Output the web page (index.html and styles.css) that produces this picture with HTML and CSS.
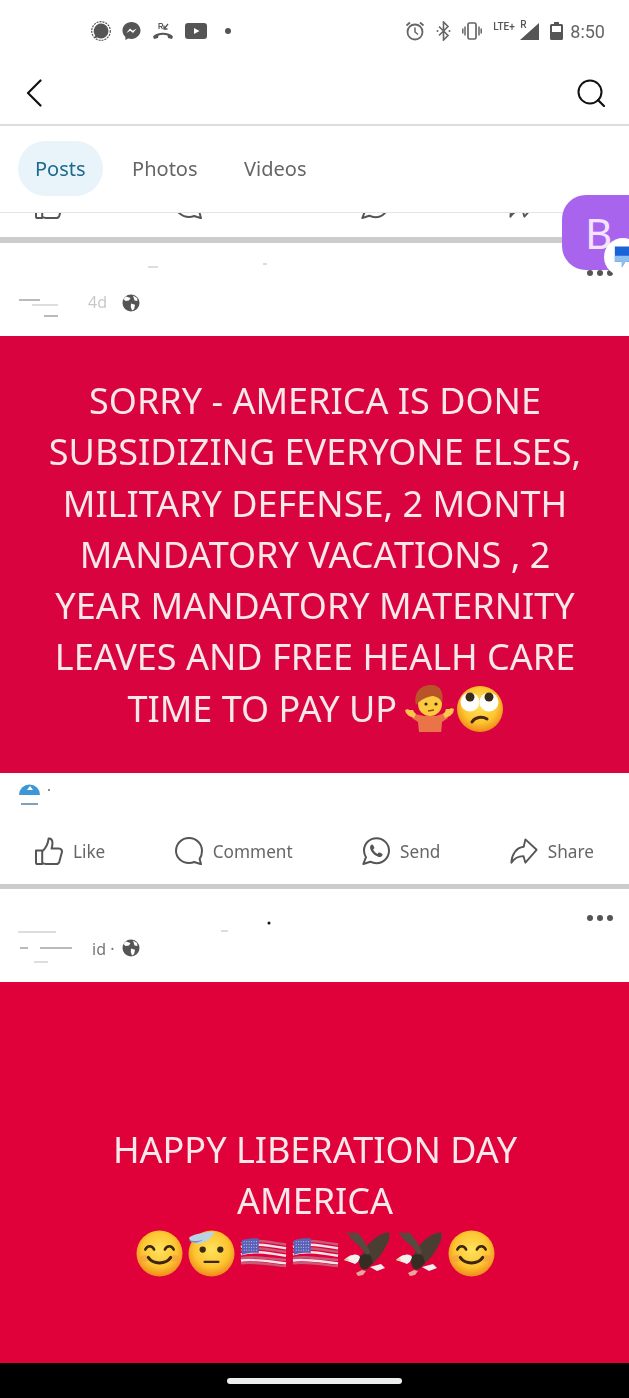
FILE: index.html
```html
<!DOCTYPE html>
<html lang="en">
<head>
  <meta charset="UTF-8" />
  <meta name="viewport" content="width=device-width, initial-scale=1.0" />
  <title>Posts</title>
  <link rel="stylesheet" href="styles.css">
</head>
<body>

  <!-- Shared icons -->
  <svg class="defs" aria-hidden="true">
    <defs>
      <radialGradient id="face" cx="50%" cy="42%" r="58%">
        <stop offset="0%" stop-color="#ffe25c"/>
        <stop offset="65%" stop-color="#fdc531"/>
        <stop offset="100%" stop-color="#f08a1a"/>
      </radialGradient>
      <symbol id="i-like" viewBox="0 0 28 28">
        <path d="M1 13.5h6.2V27H2.600A1.600 1.600 0 0 1 1 25.400zM7.200 14.500C11 11 13 7 13.600 1.600c3.600-.6 4.800 3.400 3 10h7.200c2.600 0 3.600 2 3 4l-2.400 9c-.5 1.600-1.500 2.400-3 2.400H11c-1.600 0-2.800-.4-3.800-1.200" fill="none" stroke="currentColor" stroke-width="2" stroke-linejoin="round"/>
      </symbol>
      <symbol id="i-comment" viewBox="0 0 28 28">
        <path d="M14 1C6.800 1 1 6.600 1 13.800 1 20.900 6.800 26 14 26c2 0 3.600-.3 5.200-1l6.800 2.200-1.400-5.400c1.700-2.200 2.400-5 2.400-8C27 6.600 21.200 1 14 1z" fill="none" stroke="currentColor" stroke-width="2" stroke-linejoin="round"/>
      </symbol>
      <symbol id="i-send" viewBox="0 0 28 28">
        <path d="M14.500 1.200C7.500 1.200 2 6.700 2 13.500c0 2.500.7 4.700 2 6.700L1.300 27l7-2.300c1.900 1 3.900 1.500 6.200 1.500C21.500 26.200 27 20.500 27 13.700S21.500 1.200 14.500 1.200z" fill="none" stroke="currentColor" stroke-width="2" stroke-linejoin="round"/>
        <path d="M10 7.500c-1.500.5-2.200 2-1.900 3.600.8 3.900 4.600 7.900 8.600 8.800 1.700.4 3.300-.4 3.800-2 .2-.5 0-.9-.4-1.100l-2.600-1.300c-.4-.2-.8-.1-1.100.3l-.9 1.100c-2-.8-3.600-2.400-4.400-4.300l1-1c.3-.3.4-.7.2-1.100L11 8c-.2-.4-.6-.6-1-.5z" fill="currentColor"/>
      </symbol>
      <symbol id="i-share" viewBox="0 0 30 28">
        <path d="M16.500 1.500 28.500 12.700 16.500 26.500 14.500 19.500C9 19.300 5 21.500 1.500 26.500 1.800 18.500 6 10.600 14.700 9.500z" fill="none" stroke="currentColor" stroke-width="2" stroke-linejoin="round"/>
      </symbol>
      <symbol id="i-globe" viewBox="0 0 18 18">
        <circle cx="9" cy="9" r="8.500" fill="#555"/>
        <path d="M4 2.500 8.500 4 7 6.500 3.500 7 1.500 5zM9 9.500l4 1.200-.8 4.300-2.200 1.500-1.200-3.500zM11 1.500l4 2.500 .5 3-3 -.5z" fill="#fff"/>
      </symbol>
      <symbol id="e-smile" viewBox="0 0 48 48">
        <circle cx="24" cy="24" r="23.500" fill="url(#face)"/>
        <ellipse cx="9" cy="29" rx="5" ry="3.500" fill="#f79a4a" opacity=".6"/>
        <ellipse cx="39" cy="29" rx="5" ry="3.500" fill="#f79a4a" opacity=".6"/>
        <path d="M9.500 20c2-4.500 7-4.500 9 0M29.500 20c2-4.500 7-4.500 9 0" fill="none" stroke="#3b2410" stroke-width="2.600" stroke-linecap="round"/>
        <path d="M12.500 28c5 7.500 18 7.500 23 0" fill="none" stroke="#3b2410" stroke-width="3" stroke-linecap="round"/>
      </symbol>
      <symbol id="e-salute" viewBox="0 0 48 48">
        <circle cx="24" cy="24" r="23.500" fill="url(#face)"/>
        <circle cx="15" cy="20" r="3.200" fill="#3b2a16"/>
        <circle cx="33" cy="20" r="3.200" fill="#3b2a16"/>
        <path d="M17 32.500h14" stroke="#3b2410" stroke-width="2.400" stroke-linecap="round"/>
        <path d="M1 8C5 4 14 3 27 1.500c-2 6.500-7 10-14 12-5 1.500-11-1-12-5.500z" fill="#b9d3e6"/>
        <path d="M1 10c4 2 10 1.500 14 0-3 3-11 5-14 0z" fill="#7b8fc4"/>
      </symbol>
      <symbol id="e-flag" viewBox="0 0 50 34">
        <g fill="none" stroke-width="2.600">
          <path d="M1 6.500C12 2.500 24 4 49 8" stroke="#c65a78"/>
          <path d="M1 10.500C12 6.500 24 8 49 12" stroke="#f7e3ea"/>
          <path d="M1 14.500C12 10.500 24 12 49 16" stroke="#c65a78"/>
          <path d="M1 18.500C12 14.500 24 16 49 20" stroke="#f7e3ea"/>
          <path d="M1 22.500C12 20.500 24 22 49 24.500" stroke="#c65a78"/>
          <path d="M1 25C14 23 26 25.500 49 28" stroke="#f7e3ea"/>
          <path d="M1 28C14 26 26 28.500 49 31" stroke="#c65a78"/>
        </g>
        <path d="M2 3.500C8 1.500 15 1 20 1.500V17C14 16.500 8 17 2 19z" fill="#5a60b4"/>
        <path d="M4 5h14M4 8h14M4 11h14M4 14h14" stroke="#c8cdf0" stroke-width="1" stroke-dasharray="1 1.600"/>
      </symbol>
      <symbol id="e-eagle" viewBox="0 0 47 47">
        <path d="M17 28C21 15 32 4 45 2c2 7-2 12-4 16-3 6-7 11-12 15l-5 5z" fill="#4a3e33"/>
        <path d="M23 26C19 20 16 16 12 13L9 12l1-2-5-2 2-1-4-3 1-2 5 2V1l3 3 1-2 5 6c3 4 6 9 8 14z" fill="#574b40"/>
        <path d="M14 27c4-3 9-4 13-1l2 7-6 6c-3 1-6 0-7-3z" fill="#352c24"/>
        <path d="M0 30c3-3 6-5 9-5 3-1 6 0 7 2-1 4-3 6-5 7-3-1-7-3-11-4z" fill="#f4f0ee"/>
        <path d="M0 30l4-2 1 3z" fill="#e9c98a"/>
        <path d="M26 37l11-3 4 4-8 3z" fill="#f4f0ee"/>
        <path d="M12 43l6-3 4 1-3 4-5 1z" fill="#e7a79b"/>
      </symbol>
    </defs>
  </svg>

  <!-- Status bar -->
  <div class="status-bar">
    <div class="status-group">
      <svg class="si" width="20" height="20" viewBox="0 0 20 20"><circle cx="10" cy="10" r="9.300" fill="none" stroke="#555" stroke-width="1.200" stroke-dasharray="2 1"/><path d="M10 2.500a7.500 7.500 0 0 1 0 15c-1.400 0-2.600-.3-3.700-1l-3 .8.900-2.900A7.500 7.500 0 0 1 10 2.500z" fill="#555"/></svg>
      <svg class="si" width="19" height="20" viewBox="0 0 19 20"><path d="M9.500 1C4.300 1 .5 4.800.5 9.600c0 2.600 1 4.800 2.900 6.400V19l2.800-1.600c1 .3 2.100.5 3.300.5 5.200 0 9-3.800 9-8.300S14.700 1 9.500 1z" fill="#555"/><path d="M4.300 12 8 7.500l2.700 2.300 4-2.300-3.700 4.500-2.700-2.300z" fill="#fff"/></svg>
      <svg class="si" width="22" height="18" viewBox="0 0 22 18"><path d="M1 14.500C5 9.500 17 9.500 21 14.500l-1 2.500-4-1-.5-2.500c-3-1-6-1-9 0L6 16l-4 1z" fill="#555"/><path d="M12 7l4-5M12 3.500V7h3.500" fill="none" stroke="#555" stroke-width="1.300"/><path d="M7 7V1.500h2.200a1.500 1.500 0 0 1 0 3H7M9 4.500 10.500 7" fill="none" stroke="#555" stroke-width="1.100"/></svg>
      <svg class="si" width="22" height="16" viewBox="0 0 22 16"><rect width="22" height="16" rx="3" fill="#555"/><path d="M9 5l5.500 3L9 11z" fill="#fff"/></svg>
      <span class="status-dot"></span>
    </div>
    <div class="status-group">
      <svg class="si" width="20" height="20" viewBox="0 0 20 20"><circle cx="10" cy="11" r="7.500" fill="none" stroke="#666" stroke-width="1.800"/><path d="M10 6.500V11l3 2.500" fill="none" stroke="#666" stroke-width="1.500"/><path d="M1.500 4.500 5 1.500M18.500 4.500 15 1.500" stroke="#666" stroke-width="1.800"/></svg>
      <svg class="si" width="15" height="20" viewBox="0 0 15 20"><path d="M3 5.500l9 9L7.500 19V1l4.500 4.500-9 9" fill="none" stroke="#666" stroke-width="1.600"/><circle cx="1.500" cy="10" r="1" fill="#666"/><circle cx="13.500" cy="10" r="1" fill="#666"/></svg>
      <svg class="si" width="20" height="18" viewBox="0 0 20 18"><rect x="6" y="1" width="8" height="16" rx="1.500" fill="none" stroke="#666" stroke-width="1.700"/><path d="M3 4.500v9M.8 6.500v5M17 4.500v9M19.200 6.500v5" stroke="#666" stroke-width="1.500"/></svg>
      <div class="net">
        <span class="net-label">LTE+</span>
        <span class="net-label net-roam">R</span>
        <svg class="net-tri" width="19" height="17" viewBox="0 0 19 17"><path d="M19 0v17H0z" fill="#555"/></svg>
      </div>
      <svg class="si" width="13" height="18" viewBox="0 0 13 18"><path d="M4 0h5v2h2.500A1.500 1.500 0 0 1 13 3.500V16.500a1.500 1.500 0 0 1-1.500 1.500h-10A1.500 1.500 0 0 1 0 16.500V3.500A1.500 1.500 0 0 1 1.500 2H4z" fill="#555"/><rect x="2" y="4" width="9" height="6" fill="#fff"/></svg>
      <span class="clock">8:50</span>
    </div>
  </div>

  <!-- Toolbar -->
  <header class="toolbar">
    <svg width="16" height="28" viewBox="0 0 16 28"><path d="M14.500 1.500 2 14l12.500 12.500" fill="none" stroke="#111" stroke-width="2.200" stroke-linecap="round" stroke-linejoin="round"/></svg>
    <svg width="28" height="28" viewBox="0 0 28 28"><circle cx="13" cy="13" r="11.500" fill="none" stroke="#111" stroke-width="2"/><path d="M21 21l6 6" stroke="#111" stroke-width="2.200" stroke-linecap="round"/></svg>
  </header>

  <!-- Tabs -->
  <nav class="tabs">
    <a class="tab tab-active">Posts</a>
    <a class="tab">Photos</a>
    <a class="tab">Videos</a>
  </nav>

  <!-- Tail of the post scrolled under the tabs -->
  <div class="clipped-icons">
    <svg class="action-icon"><use href="#i-like"/></svg>
    <svg class="action-icon"><use href="#i-comment"/></svg>
    <svg class="action-icon"><use href="#i-send"/></svg>
    <svg class="action-icon"><use href="#i-share"/></svg>
  </div>

  <!-- Post 1 -->
  <article class="post">
    <svg class="post-head" viewBox="0 0 629 93">
      <g class="smudge">
        <path d="M148 24h10M263 21h4"/>
        <path d="M19 57h21" class="dark"/>
        <path d="M32 62h26"/>
        <path d="M44 73h14" class="dark"/>
      </g>
      <text x="88" y="65" class="post-meta faint">4d</text>
      <use href="#i-globe" x="122" y="51" width="18" height="18"/>
      <g fill="#555"><circle cx="590" cy="30" r="3"/><circle cx="600" cy="30" r="3"/><circle cx="610" cy="30" r="3"/></g>
    </svg>
    <div class="card card-dark">
      <p class="card-text">SORRY - AMERICA IS DONE SUBSIDIZING EVERYONE ELSES, MILITARY DEFENSE, 2 MONTH MANDATORY VACATIONS , 2 YEAR MANDATORY MATERNITY LEAVES AND FREE HEALH CARE TIME TO PAY UP
        <svg class="emoji-shrug" viewBox="0 0 49 47">
          <path d="M14 47 13 37 7 33l3-4 9 2h12l9-3 3 5-6 4-1 13z" fill="#ea7448"/>
          <path d="M0 25l3-1 1 1 2 0 2 0 1 2 2 2-2 4-5-2-3-3zM49 24l-3-1-1 1-2 0-2 0-1 3-2 2 2 4 5-2 3-3z" fill="#fcc64a"/>
          <circle cx="25" cy="19" r="12" fill="#fcc93f"/>
          <path d="M11 20C8 6 17 0 26 0c10 0 13 8 11 18-2-5-6-7-10-7-5 1-11 3-16 9z" fill="#b8532a"/>
          <circle cx="21" cy="19" r="1.600" fill="#3b2410"/><circle cx="31" cy="19" r="1.600" fill="#3b2410"/>
          <path d="M23 26l6-1" stroke="#8a4a20" stroke-width="1.500"/>
        </svg><svg class="emoji-roll" viewBox="0 0 46 46">
          <circle cx="23" cy="23" r="23" fill="url(#face)"/>
          <circle cx="13" cy="16" r="9.500" fill="#fff"/><circle cx="32" cy="16" r="9.500" fill="#fff"/>
          <circle cx="13" cy="11" r="4.500" fill="#3b2a16"/><circle cx="32" cy="11" r="4.500" fill="#3b2a16"/>
          <path d="M15 36c3-5 10-6 15-3" fill="none" stroke="#4a2610" stroke-width="3" stroke-linecap="round"/>
        </svg>
      </p>
    </div>
    <svg class="reactions" viewBox="0 0 629 48">
      <path d="M19 22a10.500 10.500 0 0 1 21 0z" fill="#3d97d6"/>
      <path d="M30 13l-3 4h6z" fill="#fff"/>
      <path d="M21 31h17" stroke="#5a7ea0" stroke-width="1.500"/>
      <circle cx="49" cy="17" r=".9" fill="#555"/>
    </svg>
    <div class="actions">
      <div class="action"><svg class="action-icon"><use href="#i-like"/></svg>Like</div>
      <div class="action"><svg class="action-icon"><use href="#i-comment"/></svg>Comment</div>
      <div class="action"><svg class="action-icon"><use href="#i-send"/></svg>Send</div>
      <div class="action"><svg class="action-icon"><use href="#i-share"/></svg>Share</div>
    </div>
  </article>

  <!-- Post 2 -->
  <article class="post">
    <svg class="post-head" viewBox="0 0 629 93">
      <g class="smudge">
        <path d="M18 43h38M221 42h7"/>
        <path d="M20 59h8M40 59h32" class="dark"/>
        <path d="M34 73h14"/>
      </g>
      <circle cx="269" cy="34" r="1.500" fill="#111"/>
      <text x="92" y="66" class="post-meta">id ·</text>
      <use href="#i-globe" x="122" y="50" width="18" height="18"/>
      <g fill="#555"><circle cx="590" cy="29" r="3"/><circle cx="600" cy="29" r="3"/><circle cx="610" cy="29" r="3"/></g>
    </svg>
    <div class="card card-bright">
      <p class="card-text">HAPPY LIBERATION DAY AMERICA</p>
      <div class="emoji-row">
        <svg class="emoji"><use href="#e-smile"/></svg>
        <svg class="emoji"><use href="#e-salute"/></svg>
        <svg class="emoji flag"><use href="#e-flag"/></svg>
        <svg class="emoji flag"><use href="#e-flag"/></svg>
        <svg class="emoji"><use href="#e-eagle"/></svg>
        <svg class="emoji"><use href="#e-eagle"/></svg>
        <svg class="emoji"><use href="#e-smile"/></svg>
      </div>
    </div>
  </article>

  <!-- Android nav bar -->
  <div class="nav-bar"><span class="home-pill"></span></div>

  <!-- Chat head -->
  <div class="chat-head">
    B
    <span class="chat-badge">
      <svg width="28" height="28" viewBox="0 0 24 24"><path d="M5 3h19v13H14l-3 5v-5H5z" fill="#1a63d8"/><path d="M5 11h19v5H14l-3 5v-5H5z" fill="#8cc0f0"/></svg>
    </span>
  </div>

</body>
</html>
```

FILE: styles.css
```css
* {
  margin: 0;
  padding: 0;
  box-sizing: border-box;
  font-family: 'Noto Sans', sans-serif;
}
body {
  position: relative;
  width: 629px;
  height: 1398px;
  overflow: hidden;
  background: white;
  /* the screenshot is a soft video frame */
  filter: blur(.4px);
}
.defs {
  position: absolute;
  width: 0;
  height: 0;
}

/* Status bar */
.status-bar {
  height: 62px;
  display: flex;
  justify-content: space-between;
  align-items: center;
  padding: 0 24px 0 91px;
}
.status-group {
  display: flex;
  align-items: center;
  gap: 11px;
}
.status-dot {
  width: 6px;
  height: 6px;
  margin-left: 7px;
  border-radius: 50%;
  background: #555;
}
.net {
  position: relative;
  width: 46px;
  height: 18px;
}
.net-label {
  position: absolute;
  top: -1px;
  left: 0;
  font-family: 'Roboto', sans-serif;
  font-size: 10px;
  font-weight: 500;
  color: #555;
}
.net-roam {
  left: 27px;
  top: -3px;
}
.net-tri {
  position: absolute;
  right: 0;
  bottom: 0;
}
.clock {
  margin-left: -4px;
  font-family: 'Roboto', sans-serif;
  font-size: 18px;
  color: #666;
}

/* Toolbar */
.toolbar {
  height: 64px;
  display: flex;
  justify-content: space-between;
  align-items: center;
  padding: 0 24px 0 26px;
  border-bottom: 2px solid #ddd;
}

/* Tabs */
.tabs {
  height: 87px;
  display: flex;
  align-items: center;
  gap: 12.5px;
  padding: 0 0 2px 18px;
  border-bottom: 1px solid #e4e4e4;
}
.tab {
  padding: 0 17px;
  height: 55px;
  display: flex;
  align-items: center;
  font-size: 20px;
  color: #666;
}
.tab-active {
  background: #e8f3fa;
  border-radius: 28px;
  color: #1d6a8a;
}

/* Actions */
.clipped-icons {
  height: 24px;
  overflow: hidden;
  display: grid;
  grid-template-columns: 140px 186px 148px auto;
  padding-left: 35px;
}
.clipped-icons .action-icon {
  margin-top: -22px;
}
.action-icon {
  width: 28px;
  height: 28px;
  flex: none;
  color: #555;
}
.actions {
  height: 63px;
  display: flex;
  justify-content: space-between;
  align-items: center;
  padding: 0 35px 3px;
}
.action {
  display: flex;
  align-items: center;
  gap: 10px;
  font-size: 17.2px;
  color: #666;
}

/* Posts */
.post {
  border-top: 6px solid #ccc;
  background: white;
}
.post + .post {
  border-top-width: 5px;
}
.post-head {
  display: block;
  width: 629px;
  height: 93px;
}
.smudge path {
  fill: none;
  stroke: #bbb;
  stroke-width: 1;
}
.smudge .dark {
  stroke: #777;
}
.post-meta {
  font-size: 16px;
  fill: #777;
}
.faint {
  opacity: .4;
}
.reactions {
  display: block;
  width: 629px;
  height: 48px;
}

/* Coloured text cards */
.card {
  display: flex;
  flex-direction: column;
  align-items: center;
  padding: 0 38px;
  color: #f9e8ea;
}
.card-dark {
  height: 437px;
  justify-content: center;
  background: #d9043f;
}
.card-bright {
  height: 381px;
  padding-top: 142px;
  background: #e0003a;
}
.card-text {
  font-size: 36px;
  line-height: 51.3px;
  text-align: center;
  margin-left: 1px;
}
.emoji-shrug {
  width: 49px;
  height: 47px;
  vertical-align: -10px;
  margin-left: -2px;
}
.emoji-roll {
  width: 46px;
  height: 46px;
  vertical-align: -10px;
  margin-left: 3px;
}
.emoji-row {
  display: flex;
  align-items: center;
  gap: 5px;
  margin: 3px 0 0 1px;
}
.emoji {
  width: 47px;
  height: 47px;
}
.flag {
  height: 34px;
}

/* Bottom bar */
.nav-bar {
  height: 35px;
  display: flex;
  justify-content: center;
  align-items: center;
  background: black;
}
.home-pill {
  width: 175px;
  height: 6px;
  border-radius: 3px;
  background: #eee;
}

/* Chat head */
.chat-head {
  position: absolute;
  top: 195px;
  left: 562px;
  width: 90px;
  height: 75px;
  padding-left: 23px;
  border-radius: 24px;
  background: #a964ee;
  color: #f3e3ff;
  font-size: 42px;
  line-height: 76px;
}
.chat-badge {
  position: absolute;
  top: 43px;
  left: 42px;
  width: 38px;
  height: 38px;
  display: flex;
  align-items: center;
  justify-content: center;
  border-radius: 50%;
  background: white;
}
```
